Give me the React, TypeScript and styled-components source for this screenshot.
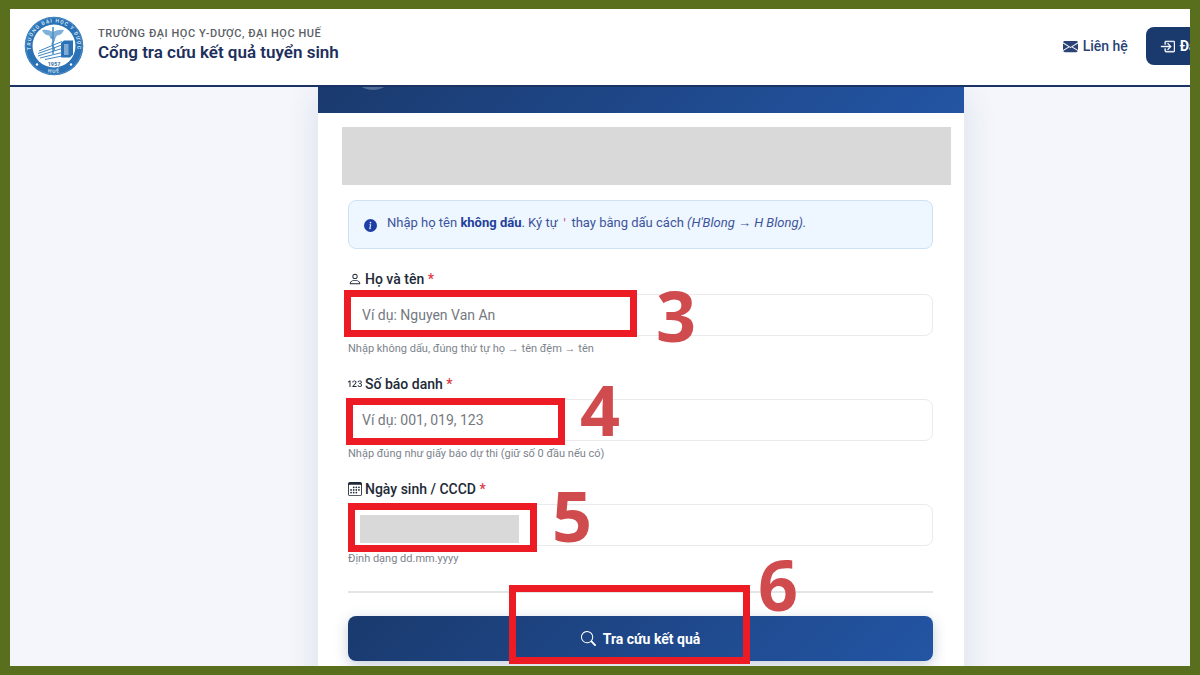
import React from "react";
import styled, { createGlobalStyle } from "styled-components";
import {
  Bs123,
  BsBoxArrowInRight,
  BsCalendar3,
  BsEnvelopeFill,
  BsInfoCircleFill,
  BsPerson,
  BsSearch,
} from "react-icons/bs";

const GlobalStyle = createGlobalStyle`
  *, *::before, *::after { box-sizing: border-box; }
  body {
    margin: 0;
    font-family: Roboto, "Liberation Sans", sans-serif;
    font-size: 14px;
    color: #212936;
    background: #5a6f1d;
  }
`;

const navy = "#1a3a6e";

const Frame = styled.div`
  height: 100vh;
  border: solid #5a6f1d;
  border-width: 9px 10px;
  overflow: hidden;
  background: #f4f6fb;
`;

/* The portal is wider than the frame, so its right edge runs out of view. */
const Page = styled.div`
  width: calc(100% + 82px);
`;

const Header = styled.header`
  position: relative;
  z-index: 1;
  display: flex;
  align-items: center;
  justify-content: space-between;
  height: 78px;
  padding: 0 11px 2px 14px;
  background: #fff;
  border-bottom: 2px solid #1b3362;
`;

const Brand = styled.a`
  display: flex;
  align-items: center;
  gap: 14px;
  color: ${navy};
  text-decoration: none;
`;

const Seal = styled.svg`
  display: block;
  width: 60px;
  height: 60px;
`;

const BrandText = styled.span`
  display: flex;
  flex-direction: column;
  padding-bottom: 5px;
`;

const School = styled.span`
  font-size: 11px;
  line-height: 16px;
  font-weight: 500;
  letter-spacing: 0.05em;
  color: #5c5f66;
`;

const SiteTitle = styled.span`
  font-size: 17px;
  line-height: 20px;
  font-weight: 600;
  color: #1d2f5c;
`;

const Nav = styled.nav`
  display: flex;
  align-items: center;
  gap: 18px;
`;

const NavLink = styled.a`
  display: flex;
  align-items: center;
  gap: 5px;
  font-weight: 500;
  color: #2b4474;
  text-decoration: none;
`;

const LoginLink = styled(NavLink)`
  height: 38px;
  padding: 0 14px;
  border-radius: 8px;
  font-weight: 700;
  color: #fff;
  background: ${navy};
`;

const Card = styled.main`
  max-width: 646px;
  margin: 0 auto;
  background: #fff;
  box-shadow: 0 8px 32px rgba(26, 58, 110, 0.12);
`;

const CardHead = styled.div`
  display: flex;
  align-items: flex-end;
  height: 26px;
  padding: 0 33px 23px;
  overflow: hidden;
  background: linear-gradient(135deg, #1a3a6e, #2355a4);
`;

const HeadBadge = styled.span`
  flex: none;
  width: 44px;
  height: 44px;
  border-radius: 50%;
  background: rgba(255, 255, 255, 0.25);
`;

const CardBody = styled.form`
  padding: 14px 31px 30px 30px;
`;

const HiddenNotice = styled.div`
  height: 58px;
  margin: 0 -18px 15px -6px;
  background: #d9d9d9;
`;

const Info = styled.div`
  display: flex;
  gap: 10px;
  height: 49px;
  margin-bottom: 20px;
  padding: 12px 15px;
  border: 1px solid #cfe2f3;
  border-radius: 8px;
  font-size: 13px;
  line-height: 20px;
  color: #3c549a;
  background: #eef6ff;

  strong { color: #23409b; }
  code { font-size: 12px; color: #c2607f; }
  svg { flex: none; margin-top: 6px; color: #1d3fa5; }
`;

const Field = styled.div`
  position: relative;
  display: flex;
  flex-direction: column;
  margin-bottom: 16px;
`;

const Label = styled.label`
  display: flex;
  align-items: center;
  gap: 3px;
  margin-bottom: 5px;
  line-height: 20px;
  font-weight: 500;
`;

const Required = styled.span`
  color: #dc3545;
`;

const Input = styled.input`
  width: 100%;
  height: 42px;
  padding: 0 13px;
  border: 1px solid #e8eaee;
  border-radius: 8px;
  font: inherit;
  color: #212936;
  background: #fff;

  &::placeholder { color: #75797f; opacity: 1; }
`;

const Help = styled.small`
  margin-top: 4px;
  font-size: 11px;
  line-height: 18px;
  color: #7d838c;
`;

const Mask = styled.span`
  position: absolute;
  top: 36px;
  left: 12px;
  width: 159px;
  height: 28px;
  background: #d9d9d9;
`;

const SubmitArea = styled.div`
  position: relative;
  margin-top: 23px;
  padding-top: 23px;
  border-top: 2px solid #e2e5e8;
`;

const Submit = styled.button`
  display: flex;
  align-items: center;
  justify-content: center;
  gap: 7px;
  width: 100%;
  height: 45px;
  border: 0;
  border-radius: 8px;
  font: inherit;
  font-weight: 700;
  color: #fff;
  background: linear-gradient(135deg, #1a3a6e, #2355a4);
  box-shadow: 0 4px 14px rgba(26, 58, 110, 0.25);
`;

type MarkBox = { $x: number; $y: number; $w: number; $h: number };

const Ring = styled.span<MarkBox>`
  position: absolute;
  left: ${(p) => p.$x}px;
  top: ${(p) => p.$y}px;
  width: ${(p) => p.$w}px;
  height: ${(p) => p.$h}px;
  border: 7px solid #ed1c24;
  pointer-events: none;
`;

const StepNumber = styled.span<{ $x: number; $y: number }>`
  position: absolute;
  left: ${(p) => p.$x}px;
  top: ${(p) => p.$y}px;
  font-family: "Open Sans", "Noto Sans", sans-serif;
  font-size: 70px;
  line-height: 70px;
  font-weight: 700;
  color: #d04b4e;
  pointer-events: none;
`;

function UniversitySeal() {
  return (
    <Seal viewBox="0 0 60 60" aria-hidden="true">
      <defs>
        <path id="seal-top" d="M10.500 43 A23.500 23.500 0 1 1 49.500 43" />
        <path id="seal-bottom" d="M17 53.500 A26.700 26.700 0 0 0 43 53.500" />
      </defs>
      <circle cx="30" cy="30" r="29.300" fill="#2a72b5" />
      <circle cx="30" cy="30" r="28.300" fill="none" stroke="#6fa5d3" strokeWidth="0.500" />
      <circle cx="30" cy="30" r="21.500" fill="#fff" />
      <g fill="#cfe2f2" fontFamily="Roboto, sans-serif" fontWeight="700" fontSize="5">
        <text letterSpacing="1">
          <textPath href="#seal-top" startOffset="50%" textAnchor="middle">
            TRƯỜNG ĐẠI HỌC Y DƯỢC
          </textPath>
        </text>
        <text letterSpacing="1">
          <textPath href="#seal-bottom" startOffset="50%" textAnchor="middle">HUẾ</textPath>
        </text>
      </g>
      <circle cx="13" cy="48.500" r="1.200" fill="#fff" />
      <circle cx="47" cy="48.500" r="1.200" fill="#fff" />
      <g fill="#7fb0d8">
        <path d="M18 14 Q24 13 29 16 Q34 13 40 14 Q38 19 33 19.500 L31 23 H27 L25 19.500 Q20 19 18 14Z" />
        <path d="M28.200 11h1.600v27h-1.600z" fill="#4d8fc8" />
        <path d="M27 21q5 2 2.500 4.500t-0.500 5q3 2 0 5" fill="none" stroke="#4d8fc8" strokeWidth="1.200" />
      </g>
      <path d="M37 27l3-2.500h9v14l-3 3h-9z" fill="#2a72b5" />
      <path d="M40 28h4.500v11h-4.500z" fill="#fff" opacity="0.400" />
      <g fill="none" stroke="#3f86c2" strokeWidth="1">
        <path d="M15 35L38 25.500M14 37.500L38 29M14 40l24-7.500M16 42l22-5.500M21 43.500l17-3.500" />
      </g>
      <text x="30" y="49.500" textAnchor="middle" fontFamily="Roboto, sans-serif" fontWeight="700" fontSize="5.500" fill="#3c6f9f">
        1957
      </text>
    </Seal>
  );
}

export default function App() {
  return (
    <>
      <GlobalStyle />
      <Frame>
        <Page>
          <Header>
            <Brand href="#">
              <UniversitySeal />
              <BrandText>
                <School>TRƯỜNG ĐẠI HỌC Y-DƯỢC, ĐẠI HỌC HUẾ</School>
                <SiteTitle>Cổng tra cứu kết quả tuyển sinh</SiteTitle>
              </BrandText>
            </Brand>
            <Nav>
              <NavLink href="#contact">
                <BsEnvelopeFill size={15} />
                Liên hệ
              </NavLink>
              <LoginLink href="#login">
                <BsBoxArrowInRight size={15} strokeWidth={0.5} />
                Đăng nhập
              </LoginLink>
            </Nav>
          </Header>

          <Card>
            <CardHead>
              <HeadBadge />
            </CardHead>
            <CardBody>
              <HiddenNotice />
              <Info>
                <BsInfoCircleFill size={13} />
                <span>
                  Nhập họ tên <strong>không dấu</strong>. Ký tự <code>'</code> thay bằng dấu cách{" "}
                  <em>(H'Blong → H Blong).</em>
                </span>
              </Info>

              <Field>
                <Label htmlFor="fullname">
                  <BsPerson size={14} />
                  <span>
                    Họ và tên <Required>*</Required>
                  </span>
                </Label>
                <Input id="fullname" type="text" placeholder="Ví dụ: Nguyen Van An" />
                <Help>Nhập không dấu, đúng thứ tự họ → tên đệm → tên</Help>
                <Ring $x={-4} $y={21} $w={293} $h={47} />
                <StepNumber $x={308} $y={11}>3</StepNumber>
              </Field>

              <Field>
                <Label htmlFor="candidate">
                  <Bs123 size={14} />
                  <span>
                    Số báo danh <Required>*</Required>
                  </span>
                </Label>
                <Input id="candidate" type="text" placeholder="Ví dụ: 001, 019, 123" />
                <Help>Nhập đúng như giấy báo dự thi (giữ số 0 đầu nếu có)</Help>
                <Ring $x={-2} $y={24} $w={219} $h={47} />
                <StepNumber $x={232} $y={0}>4</StepNumber>
              </Field>

              <Field>
                <Label htmlFor="birth">
                  <BsCalendar3 size={14} />
                  <span>
                    Ngày sinh / CCCD <Required>*</Required>
                  </span>
                </Label>
                <Input id="birth" type="text" />
                <Help>Định dạng dd.mm.yyyy</Help>
                <Mask />
                <Ring $x={0} $y={24} $w={189} $h={49} />
                <StepNumber $x={204} $y={1}>5</StepNumber>
              </Field>

              <SubmitArea>
                <Submit type="button">
                  <BsSearch size={15} />
                  Tra cứu kết quả
                </Submit>
                <Ring $x={161} $y={-8} $w={241} $h={79} />
                <StepNumber $x={410} $y={-44}>6</StepNumber>
              </SubmitArea>
            </CardBody>
          </Card>
        </Page>
      </Frame>
    </>
  );
}
